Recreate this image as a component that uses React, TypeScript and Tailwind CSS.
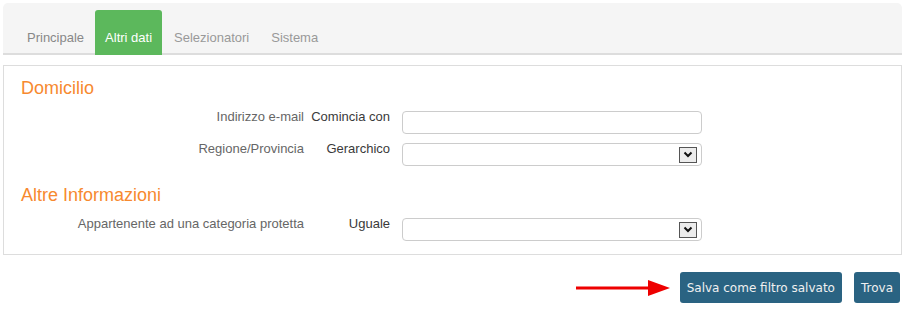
import React from "react";

const font = { fontFamily: '"Liberation Sans", Arial, sans-serif' };

function SelectBox() {
  return (
    <div className="w-[300px] h-[23px] border border-[#ccc] rounded-[4px] bg-white flex items-center justify-end pr-[4px]">
      <span className="w-[18px] h-[16px] border border-[#555] bg-[#ececec] flex items-center justify-center">
        <svg width="10" height="7" viewBox="0 0 10 7">
          <path d="M1.5 1.5 L5 5 L8.5 1.5" fill="none" stroke="#111" strokeWidth="2" />
        </svg>
      </span>
    </div>
  );
}

function Row({ label, op, children }: { label: string; op: string; children: React.ReactNode }) {
  return (
    <div className="flex items-start">
      <div className="w-[300px] text-right text-[13px] leading-[16px] text-[#666] mt-[-2px]">{label}</div>
      <div className="w-[86px] text-right text-[13px] leading-[16px] text-[#3a3a3a] mt-[-2px]">{op}</div>
      <div className="ml-[12px]">{children}</div>
    </div>
  );
}

export default function App() {
  return (
    <div className="w-[905px] h-[312px] bg-white" style={font}>
      <div className="pt-[3px] px-[3px]">
        <div className="h-[52px] bg-[#f5f5f5] rounded-t-[5px] border-b-2 border-[#ddd] flex items-end pl-[14px]">
          <div className="flex items-end mb-[-2px]">
            <div className="px-[10px] pb-[9px] text-[13px] leading-[16px] text-[#888] mr-[1px]">Principale</div>
            <div className="px-[10px] pt-[20px] pb-[9px] text-[13px] leading-[16px] text-white bg-[#5cb85c] rounded-t-[3px] mr-[2px] h-[45px]">Altri dati</div>
            <div className="px-[10px] pb-[9px] text-[13px] leading-[16px] text-[#999] mr-[2px]">Selezionatori</div>
            <div className="px-[10px] pb-[9px] text-[13px] leading-[16px] text-[#999]">Sistema</div>
          </div>
        </div>
      </div>
      <div className="mx-[3px] mt-[10px] border border-[#ddd] pt-[10px] pb-[13px]">
        <div className="pl-[17px] text-[18px] leading-[24px] text-[#f7892f] mb-[11px]">Domicilio</div>
        <div className="flex flex-col gap-[9px]">
          <Row label="Indirizzo e-mail" op="Comincia con">
            <div className="w-[300px] h-[23px] border border-[#ccc] rounded-[4px] bg-white" />
          </Row>
          <Row label="Regione/Provincia" op="Gerarchico">
            <SelectBox />
          </Row>
        </div>
        <div className="pl-[17px] text-[18px] leading-[24px] text-[#f7892f] mt-[17px] mb-[11px]">Altre Informazioni</div>
        <Row label="Appartenente ad una categoria protetta" op="Uguale">
          <SelectBox />
        </Row>
      </div>
      <div className="flex items-center justify-end mt-[17px] pr-[5px]">
        <svg width="94" height="20" viewBox="0 0 94 20" className="mr-[10px]">
          <line x1="0" y1="10" x2="74" y2="10" stroke="#ee0000" strokeWidth="3" />
          <polygon points="72,2 94,10 72,18" fill="#ee0000" />
        </svg>
        <button
          className="h-[31px] px-[7px] bg-[#2a6382] text-[#f0f0f0] text-[12px] rounded-[3px] mr-[12px]"
          style={{ fontFamily: '"DejaVu Sans", Verdana, sans-serif' }}
        >
          Salva come filtro salvato
        </button>
        <button
          className="h-[31px] px-[7px] bg-[#2a6382] text-[#f0f0f0] text-[12px] rounded-[3px]"
          style={{ fontFamily: '"DejaVu Sans", Verdana, sans-serif' }}
        >
          Trova
        </button>
      </div>
    </div>
  );
}
